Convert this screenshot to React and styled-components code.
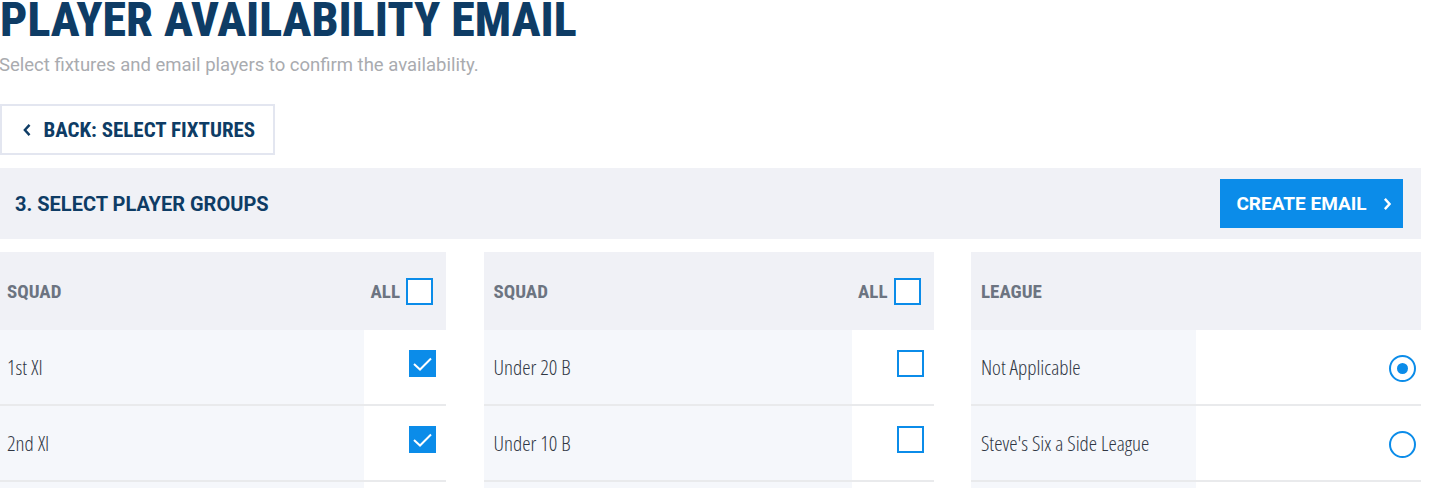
import React from "react";
import styled, {createGlobalStyle} from "styled-components";

const GlobalStyle = createGlobalStyle`
  body {
    margin: 0;
    background: #fff;
    font-family: Roboto, "Liberation Sans", sans-serif;
  }
`;

const NAVY = "#0e3c65";
const BLUE = "#0b8ce9";

const Page = styled.div`
  width: 1421px;
`;

const Title = styled.h1`
  margin: 0;
  font-family: "Roboto Condensed", Roboto, sans-serif;
  font-weight: 800;
  font-size: 48px;
  line-height: 40px;
  color: ${NAVY};
`;

const Subtitle = styled.p`
  margin: 14px 0 0 -1px;
  font-size: 18.5px;
  line-height: 22px;
  color: #a9abaf;
`;

const BackButton = styled.button`
  display: flex;
  align-items: center;
  gap: 12px;
  margin-top: 28px;
  width: 275px;
  height: 51px;
  padding: 0 0 0 21px;
  background: #fff;
  border: 2px solid #e3e6f0;
  font-family: "Roboto Condensed", Roboto, sans-serif;
  font-weight: 700;
  font-size: 21px;
  color: ${NAVY};
  cursor: pointer;
`;

const SectionBar = styled.div`
  display: flex;
  align-items: center;
  justify-content: space-between;
  margin-top: 13px;
  height: 71px;
  padding: 0 18px 0 15px;
  background: #f0f1f6;
`;

const SectionTitle = styled.h2`
  margin: 0;
  font-family: Roboto, sans-serif;
  font-weight: 700;
  font-size: 20px;
  color: ${NAVY};
`;

const PrimaryButton = styled.button`
  display: flex;
  align-items: center;
  gap: 16px;
  height: 49px;
  padding: 0 12px 0 16px;
  background: ${BLUE};
  border: none;
  font-family: Roboto, sans-serif;
  font-weight: 700;
  font-size: 19px;
  color: #fff;
  cursor: pointer;
`;

const Tables = styled.div`
  display: grid;
  grid-template-columns: 449px 450px 450px;
  column-gap: 37.5px;
  margin: 13px 0 0 -3px;
`;

const Table = styled.div`
  display: grid;
  grid-template-columns: ${p => p.split ? "225px 1fr" : "1fr 82px"};
`;

const HeadCell = styled.div`
  display: flex;
  align-items: center;
  justify-content: ${p => p.right ? "flex-end" : "flex-start"};
  gap: 6px;
  height: 78px;
  padding: ${p => p.right ? "0 13px 0 0" : "0 0 0 10px"};
  background: #f0f1f6;
  font-family: "Roboto Condensed", sans-serif;
  font-weight: 700;
  font-size: 19px;
  color: #6c7481;
`;

const LabelCell = styled.div`
  display: flex;
  align-items: center;
  height: 74px;
  padding-left: 10px;
  background: #f5f7fb;
  border-bottom: 2px solid #e9eaec;
  font-family: "Open Sans", sans-serif;
  font-stretch: condensed;
  font-weight: 300;
  font-size: 21px;
  color: #2f3643;
`;

const ControlCell = styled.div`
  display: flex;
  align-items: ${p => p.radio ? "center" : "flex-start"};
  justify-content: flex-end;
  box-sizing: border-box;
  height: 76px;
  padding: ${p => p.radio ? "2px 5px 0 0" : "20px 10px 0 0"};
  background: #fff;
  border-bottom: 2px solid #e9eaec;
`;

const Box = styled.span`
  display: flex;
  align-items: center;
  justify-content: center;
  width: 27px;
  height: 27px;
  box-sizing: border-box;
  border: 2px solid ${BLUE};
  background: ${p => p.checked ? BLUE : "#fff"};
`;

const Radio = styled.span`
  display: flex;
  align-items: center;
  justify-content: center;
  width: 27px;
  height: 27px;
  box-sizing: border-box;
  border: 2px solid ${BLUE};
  border-radius: 50%;
  background: #fff;
  &::after {
    content: "";
    display: ${p => p.checked ? "block" : "none"};
    width: 11px;
    height: 11px;
    border-radius: 50%;
    background: ${BLUE};
  }
`;

const Check = ({checked}) => (
  <Box checked={checked}>
    {checked && (
      <svg width="21" height="16" viewBox="0 0 21 16" fill="none">
        <path d="M2 8 L8 13.5 L19 2.5" stroke="#fff" strokeWidth="2"/>
      </svg>
    )}
  </Box>
);

const Chevron = ({dir, color, size = 14}) => (
  <svg width={size * 0.6} height={size} viewBox="0 0 9 14" fill="none">
    <path d={dir === "left" ? "M7 1.5 L2 7 L7 12.5" : "M2 1.5 L7 7 L2 12.5"} stroke={color} strokeWidth="2.6"/>
  </svg>
);

const SquadTable = ({rows}) => (
  <Table>
    <HeadCell>SQUAD</HeadCell>
    <HeadCell right>ALL <Check/></HeadCell>
    {rows.map(r => (
      <React.Fragment key={r.name}>
        <LabelCell>{r.name}</LabelCell>
        <ControlCell><Check checked={r.checked}/></ControlCell>
      </React.Fragment>
    ))}
  </Table>
);

const leagues = [
  {name: "Not Applicable", checked: true},
  {name: "Steve's Six a Side League", checked: false},
  {name: "Sunday League", checked: false},
];

export default function App() {
  return (
    <Page>
      <GlobalStyle/>
      <Title>PLAYER AVAILABILITY EMAIL</Title>
      <Subtitle>Select fixtures and email players to confirm the availability.</Subtitle>
      <BackButton>
        <Chevron dir="left" color={NAVY}/>
        BACK: SELECT FIXTURES
      </BackButton>
      <SectionBar>
        <SectionTitle>3. SELECT PLAYER GROUPS</SectionTitle>
        <PrimaryButton>
          CREATE EMAIL
          <Chevron dir="right" color="#fff"/>
        </PrimaryButton>
      </SectionBar>
      <Tables>
        <SquadTable rows={[
          {name: "1st XI", checked: true},
          {name: "2nd XI", checked: true},
          {name: "3rd XI", checked: false},
        ]}/>
        <SquadTable rows={[
          {name: "Under 20 B", checked: false},
          {name: "Under 10 B", checked: false},
          {name: "Under 15 A", checked: false},
        ]}/>
        <Table split>
          <HeadCell>LEAGUE</HeadCell>
          <HeadCell/>
          {leagues.map(l => (
            <React.Fragment key={l.name}>
              <LabelCell>{l.name}</LabelCell>
              <ControlCell radio><Radio checked={l.checked}/></ControlCell>
            </React.Fragment>
          ))}
        </Table>
      </Tables>
    </Page>
  );
}
